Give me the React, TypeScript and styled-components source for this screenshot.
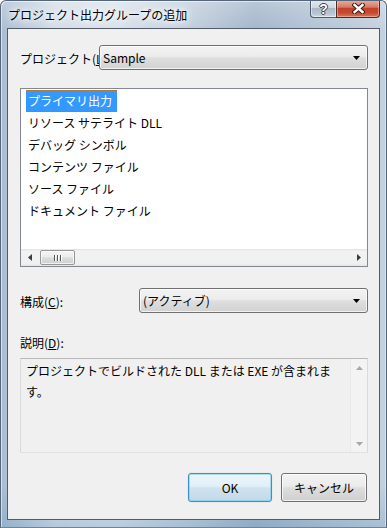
import React from "react";
import styled, { createGlobalStyle } from "styled-components";

const GlobalStyle = createGlobalStyle`
  html, body { margin: 0; padding: 0; background: #ffffff; }
  body {
    font-family: "Noto Sans CJK JP", "Noto Sans", sans-serif;
    font-size: 12px;
    color: #000;
  }
  * { box-sizing: border-box; }
`;

const Window = styled.div`
  width: 387px;
  height: 528px;
  display: flex;
  flex-direction: column;
  border: 1px solid #56667a;
  border-bottom-color: #3e94c6;
  border-radius: 6px 6px 0 0;
  padding: 0 6px 7px;
  background:
    linear-gradient(180deg, rgba(255,255,255,0.25) 0%, rgba(255,255,255,0) 6%, rgba(0,0,0,0) 92%, rgba(90,140,180,0.25) 100%),
    linear-gradient(90deg, #a9bcd1 0%, #d3dde8 14%, #d9e2eb 30%, #c2cfdd 48%, #a2b5ca 66%, #b0c1d3 80%, #c4d1de 100%);
  box-shadow: inset 1px 1px 0 rgba(255,255,255,0.55), inset -1px 0 0 rgba(255,255,255,0.4);
  overflow: hidden;
`;

const TitleBar = styled.div`
  height: 27px;
  display: flex;
  align-items: flex-start;
`;

const Title = styled.div`
  flex: 1;
  padding: 5px 0 0 1px;
  font-size: 12px;
  line-height: 17px;
  color: #000;
  white-space: nowrap;
  text-shadow: 0 0 4px #fff, 0 0 8px #fff, 0 0 12px rgba(255,255,255,0.9);
`;

const CaptionButtons = styled.div`
  display: flex;
  margin-top: -1px;
`;

const HelpButton = styled.div`
  width: 26px;
  height: 18px;
  border: 1px solid #4d5c6e;
  border-top: none;
  border-right: none;
  border-radius: 0 0 0 4px;
  background: linear-gradient(180deg, #e4eaf0 0%, #cdd7e1 45%, #a9b8c8 50%, #b8c6d4 80%, #cbd6e1 100%);
  box-shadow: inset 0 0 0 1px rgba(255,255,255,0.5);
  display: flex;
  align-items: center;
  justify-content: center;
  color: #fff;
  font-family: "Liberation Sans", "DejaVu Sans", sans-serif;
  font-weight: bold;
  font-size: 14px;
  line-height: 14px;
  text-shadow: 1px 0 0 #3a4450, -1px 0 0 #3a4450, 0 1px 0 #3a4450, 0 -1px 0 #3a4450;
`;

const CloseButton = styled.div`
  width: 44px;
  height: 18px;
  border: 1px solid #4d2a24;
  border-top: none;
  border-radius: 0 0 4px 0;
  background: linear-gradient(180deg, #e9b0a4 0%, #d77a64 42%, #c2412a 50%, #c64a2e 75%, #d8765a 100%);
  box-shadow: inset 0 0 0 1px rgba(255,220,210,0.45);
  display: flex;
  align-items: center;
  justify-content: center;
`;

const Client = styled.div`
  flex: 1;
  display: flex;
  flex-direction: column;
  background: #f0f0f0;
  border: 1px solid #525c68;
  padding: 16px 11px 17px 12px;
`;

const FieldRow = styled.div<{ $gap?: number }>`
  display: flex;
  align-items: flex-start;
  height: 25px;
  margin-top: ${(p) => p.$gap ?? 0}px;
`;

const FieldLabel = styled.div<{ $width: number; $drop: number }>`
  flex: none;
  width: ${(p) => p.$width}px;
  padding-top: ${(p) => p.$drop}px;
  white-space: nowrap;
  overflow: hidden;
  line-height: 16px;
`;

const Combo = styled.div`
  flex: 1;
  height: 25px;
  display: flex;
  align-items: center;
  padding: 0 7px 0 3px;
  border: 1px solid #707070;
  border-radius: 3px;
  background: linear-gradient(180deg, #f3f3f3 0%, #ececec 45%, #dedede 52%, #d2d2d2 100%);
  box-shadow: inset 0 0 0 1px rgba(255,255,255,0.7);
`;

const ComboText = styled.span`
  flex: 1;
  line-height: 16px;
  white-space: nowrap;
`;

const ListBox = styled.div`
  margin-top: 18px;
  height: 179px;
  display: flex;
  flex-direction: column;
  border: 1px solid #828790;
  background: #ffffff;
`;

const ListItems = styled.ul`
  flex: 1;
  margin: 0;
  padding: 1px 5px;
  list-style: none;
  display: flex;
  flex-direction: column;
  align-items: flex-start;
`;

const ListItem = styled.li<{ $selected?: boolean }>`
  height: 22px;
  line-height: 20px;
  padding: 0 4px 0 1px;
  white-space: nowrap;
  border: 1px ${(p) => (p.$selected ? "dotted #b07838" : "solid transparent")};
  background: ${(p) => (p.$selected ? "#3399ff" : "transparent")};
  color: ${(p) => (p.$selected ? "#ffffff" : "#000000")};
`;

const HScroll = styled.div`
  height: 17px;
  display: flex;
  align-items: center;
  background: linear-gradient(180deg, #e4e4e4 0%, #f2f2f2 15%, #f0f0f0 85%, #e6e6e6 100%);
`;

const ArrowCell = styled.div`
  width: 17px;
  height: 17px;
  flex: none;
  display: flex;
  align-items: center;
  justify-content: center;
`;

const Track = styled.div`
  flex: 1;
  height: 17px;
  display: flex;
  align-items: center;
  padding-left: 2px;
`;

const Thumb = styled.div`
  width: 35px;
  height: 15px;
  border: 1px solid #979797;
  border-radius: 2px;
  background: linear-gradient(180deg, #f5f5f5 0%, #ececec 45%, #dcdcdc 52%, #d0d0d0 100%);
  box-shadow: inset 0 0 0 1px rgba(255,255,255,0.7);
  display: flex;
  align-items: center;
  justify-content: center;
  gap: 2px;
`;

const Grip = styled.span`
  width: 1px;
  height: 6px;
  background: #555;
  box-shadow: 1px 0 0 #fff;
`;

const PlainLabel = styled.div`
  margin-top: 22px;
  height: 16px;
  line-height: 16px;
`;

const DescBox = styled.div`
  margin-top: 7px;
  height: 95px;
  display: flex;
  border: 1px solid;
  border-color: #b9b9b9 #dadada #e2e2e2 #dadada;
  background: #f0f0f0;
`;

const DescText = styled.div`
  flex: 1;
  padding: 1px 6px 0 5px;
  line-height: 21px;
`;

const VScroll = styled.div`
  width: 17px;
  flex: none;
  display: flex;
  flex-direction: column;
  justify-content: space-between;
  border-left: 1px solid #e9e9e9;
  background: #f3f3f3;
`;

const ButtonRow = styled.div`
  margin-top: 20px;
  display: flex;
  justify-content: flex-end;
  gap: 9px;
  padding-right: 1px;
`;

const PushButton = styled.button<{ $default?: boolean; $width: number }>`
  width: ${(p) => p.$width}px;
  height: 29px;
  font: inherit;
  color: #000;
  border-radius: 3px;
  padding: 0;
  border: 1px solid ${(p) => (p.$default ? "#3c8fc8" : "#707070")};
  background: ${(p) =>
    p.$default
      ? "linear-gradient(180deg, #edf6fb 0%, #e2eff7 45%, #cfe2ef 52%, #c3d9e8 100%)"
      : "linear-gradient(180deg, #f3f3f3 0%, #ebebeb 45%, #dddddd 52%, #cfcfcf 100%)"};
  box-shadow: ${(p) =>
    p.$default
      ? "inset 0 0 0 1px rgba(110,200,240,0.55), 0 0 1px rgba(60,160,220,0.5)"
      : "inset 0 0 0 1px rgba(255,255,255,0.75)"};
`;

const DownArrow = ({ color = "#000" }: { color?: string }) => (
  <svg width="7" height="4" viewBox="0 0 7 4">
    <path d="M0 0 H7 L3.5 4 Z" fill={color} />
  </svg>
);

const UpArrow = ({ color = "#000" }: { color?: string }) => (
  <svg width="7" height="4" viewBox="0 0 7 4">
    <path d="M0 4 H7 L3.5 0 Z" fill={color} />
  </svg>
);

const LeftArrow = () => (
  <svg width="4" height="7" viewBox="0 0 4 7">
    <path d="M4 0 V7 L0 3.5 Z" fill="#3c3c3c" />
  </svg>
);

const RightArrow = () => (
  <svg width="4" height="7" viewBox="0 0 4 7">
    <path d="M0 0 V7 L4 3.5 Z" fill="#3c3c3c" />
  </svg>
);

const CloseGlyph = () => (
  <svg width="13" height="11" viewBox="0 0 13 11">
    <path d="M2.5 2 L10.5 9 M10.5 2 L2.5 9" stroke="#3a1d18" strokeWidth="4.4" strokeLinecap="square" />
    <path d="M2.5 2 L10.5 9 M10.5 2 L2.5 9" stroke="#ffffff" strokeWidth="2.4" strokeLinecap="square" />
  </svg>
);

const items = [
  "プライマリ出力",
  "リソース サテライト DLL",
  "デバッグ シンボル",
  "コンテンツ ファイル",
  "ソース ファイル",
  "ドキュメント ファイル",
];

export default function App() {
  return (
    <>
      <GlobalStyle />
      <Window>
        <TitleBar>
          <Title>プロジェクト出力グループの追加</Title>
          <CaptionButtons>
            <HelpButton>?</HelpButton>
            <CloseButton>
              <CloseGlyph />
            </CloseButton>
          </CaptionButtons>
        </TitleBar>
        <Client>
          <FieldRow>
            <FieldLabel $width={79} $drop={6}>
              プロジェクト(<u>L</u>)
            </FieldLabel>
            <Combo>
              <ComboText>Sample</ComboText>
              <DownArrow />
            </Combo>
          </FieldRow>

          <ListBox>
            <ListItems>
              {items.map((t, i) => (
                <ListItem key={t} $selected={i === 0}>
                  {t}
                </ListItem>
              ))}
            </ListItems>
            <HScroll>
              <ArrowCell>
                <LeftArrow />
              </ArrowCell>
              <Track>
                <Thumb>
                  <Grip />
                  <Grip />
                  <Grip />
                </Thumb>
              </Track>
              <ArrowCell>
                <RightArrow />
              </ArrowCell>
            </HScroll>
          </ListBox>

          <FieldRow $gap={21}>
            <FieldLabel $width={119} $drop={6}>
              構成(<u>C</u>):
            </FieldLabel>
            <Combo>
              <ComboText>(アクティブ)</ComboText>
              <DownArrow />
            </Combo>
          </FieldRow>

          <PlainLabel>
            説明(<u>D</u>):
          </PlainLabel>
          <DescBox>
            <DescText>プロジェクトでビルドされた DLL または EXE が含まれます。</DescText>
            <VScroll>
              <ArrowCell>
                <UpArrow color="#a8a8a8" />
              </ArrowCell>
              <ArrowCell>
                <DownArrow color="#a8a8a8" />
              </ArrowCell>
            </VScroll>
          </DescBox>

          <ButtonRow>
            <PushButton $default $width={84}>OK</PushButton>
            <PushButton $width={86}>キャンセル</PushButton>
          </ButtonRow>
        </Client>
      </Window>
    </>
  );
}
